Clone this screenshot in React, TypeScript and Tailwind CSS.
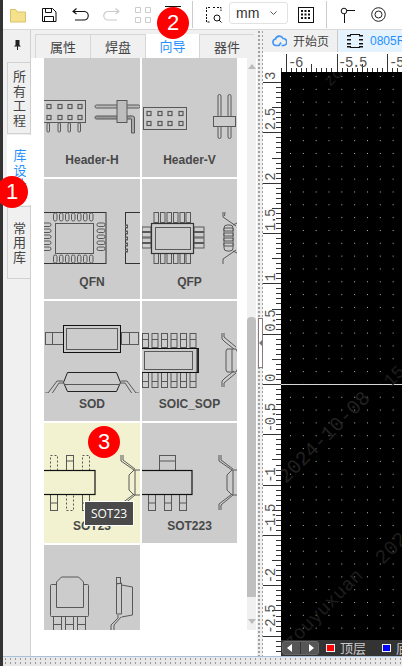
import type { ReactNode } from "react";

const cjk = "font-['Noto_Sans_CJK_SC','Noto_Sans',sans-serif]";

// page-coordinate viewBoxes, so the numbers below read straight off the screenshot
function Part({ box, h, children }: { box: number[]; h: number; children: ReactNode }) {
  return (
    <svg
      width={box[2]}
      height={h}
      viewBox={`${box[0]} ${box[1]} ${box[2]} ${h}`}
      className="block shrink-0"
      fill="none"
      stroke="#585858"
      strokeWidth="1"
    >
      {children}
    </svg>
  );
}

function Tile({
  box,
  label,
  h = 92,
  height = "h-[120px]",
  bg = "bg-[#cccccc]",
  children,
}: {
  box: number[];
  label?: string;
  h?: number;
  height?: string;
  bg?: string;
  children: ReactNode;
}) {
  return (
    <div className={`${height} ${bg} overflow-hidden`}>
      <Part box={box} h={h}>
        {children}
      </Part>
      {label && (
        <div className="h-[22px] flex items-center justify-center text-[12px] leading-none font-bold text-[#484848] font-['Liberation_Sans',sans-serif]">
          {label}
        </div>
      )}
    </div>
  );
}

function Rects({ list, dashed }: { list: number[][]; dashed?: boolean }) {
  return (
    <>
      {list.map((r, i) => (
        <rect
          key={i}
          x={r[0] + 0.5}
          y={r[1] + 0.5}
          width={r[2]}
          height={r[3]}
          rx={r[4] || 0}
          strokeDasharray={dashed ? "2 2" : undefined}
        />
      ))}
    </>
  );
}

function HeaderH() {
  const xs = [48, 59, 69, 79];
  return (
    <>
      <rect x="43.5" y="100.5" width="42" height="22" />
      {xs.map((x) => (
        <g key={x}>
          <rect x={x - 1} y="104.5" width="4" height="4" strokeWidth="1.2" />
          <rect x={x - 1} y="115.5" width="4" height="4" strokeWidth="1.2" />
          <rect x={x - 1} y="123" width="2.5" height="9" rx="1" strokeWidth="1" />
        </g>
      ))}
      <rect x="95" y="105" width="45" height="3" rx="1.5" fill="#bbb" />
      <rect x="95" y="116" width="37" height="3" rx="1.5" fill="#999" />
      <path d="M130 116h2.5a2 2 0 0 1 2 2v15h-3v-14" fill="#aaa" />
      <rect x="117" y="100.5" width="10" height="22" fill="#bdbdbd" />
    </>
  );
}

function HeaderV() {
  const xs = [148, 159, 169, 180];
  return (
    <>
      <rect x="143.5" y="107.5" width="43" height="22" />
      {xs.map((x) => (
        <g key={x}>
          <rect x={x - 1} y="111.5" width="4" height="4" strokeWidth="1.2" />
          <rect x={x - 1} y="121.5" width="4" height="4" strokeWidth="1.2" />
        </g>
      ))}
      <rect x="218" y="94.5" width="3" height="44" rx="1.5" />
      <rect x="228" y="94.5" width="3" height="44" rx="1.5" />
      <rect x="213.5" y="116.5" width="22" height="10" fill="#cccccc" />
    </>
  );
}

function Qfn() {
  const tops = [54, 60, 66, 72, 78, 84, 90];
  const sides = [223, 229, 235, 241, 247];
  return (
    <>
      <rect x="40" y="212.5" width="66" height="51" stroke="#333" />
      <rect x="55.5" y="223.5" width="38" height="30" />
      {tops.map((x) => (
        <g key={x}>
          <rect x={x - 0.5} y="213" width="3.5" height="8" rx="1.7" />
          <rect x={x - 0.5} y="255" width="3.5" height="8" rx="1.7" />
        </g>
      ))}
      {sides.map((y) => (
        <g key={y}>
          <rect x="40" y={y} width="11" height="3.5" rx="1.7" />
          <rect x="97" y={y} width="8" height="3.5" rx="1.7" />
        </g>
      ))}
      <rect x="125.5" y="212.5" width="20" height="51" stroke="#333" />
      {[225, 231, 237, 243, 249].map((y) => (
        <rect key={y} x="125.5" y={y} width="2" height="3" />
      ))}
    </>
  );
}

function Qfp() {
  const xs = [154, 160.5, 167, 173.5, 180, 186];
  const ys = [227, 232.5, 238, 243.5];
  return (
    <>
      {xs.map((x) => (
        <g key={x}>
          <rect x={x} y="212.5" width="4.5" height="10" />
          <rect x={x} y="253.5" width="4.5" height="10" />
        </g>
      ))}
      {ys.map((y) => (
        <g key={y}>
          <rect x="142" y={y} width="9" height="4.5" />
          <rect x="194" y={y} width="10" height="4.5" />
        </g>
      ))}
      <rect x="151.5" y="223.5" width="42" height="30" fill="#cccccc" stroke="#333" strokeWidth="1.2" />
      <rect x="155.5" y="227.5" width="35" height="22" />
      <path d="M223 212v5l13 9M223 264v-5l13-9M225 212l-.5 4" />
      <rect x="224" y="225" width="9" height="26" rx="3" />
      {[228, 233, 238, 243].map((y) => (
        <rect key={y} x="223.5" y={y} width="10" height="3" rx="1.5" />
      ))}
      <path d="M233 225l4-2M233 251l4 2" />
    </>
  );
}

function Sod() {
  return (
    <>
      <rect x="45.5" y="332.5" width="18" height="12" />
      <path d="M52.5 332v13M129.5 332v13" />
      <rect x="121.5" y="332.5" width="17" height="12" />
      <rect x="63.5" y="325.5" width="57" height="27" stroke="#111" fill="#cccccc" />
      <rect x="66.5" y="328.5" width="51" height="21" />
      <path d="M63.5 382.5L67.5 372.5H116.5L120.5 382.5L116.5 391.5H67.5Z" stroke="#222" />
      <path d="M64 384.5H120" />
      <path d="M63 381h-6l-9 12h-3v2h6l8-12h4M121 381h6l9 12h3v2h-6l-8-12h-4" />
    </>
  );
}

function Soic() {
  const xs = [142.5, 152, 161.5, 171, 180.5, 190];
  return (
    <>
      {xs.map((x) => (
        <g key={x}>
          <rect x={x} y="333.5" width="6" height="14" />
          <path d={`M${x} 339.5h6M${x} 381.5h6`} />
          <rect x={x} y="372.5" width="6" height="15" />
        </g>
      ))}
      <rect x="140" y="348.5" width="58.5" height="24" stroke="#111" fill="#cccccc" />
      <path d="M197.500 349v23" strokeWidth="2" stroke="#333" />
      <rect x="144.5" y="351.5" width="48" height="18" />
      <path d="M222 333v6l3 3 9 7M222 387v-6l3-3 9-7M224 333v4l12 10M224 387v-4l12-10" />
      <path d="M227 349h9l2 4v15l-2 4h-9l-1-2v-19z" />
      <path d="M232 349v23" />
    </>
  );
}

function SideLeads({ x }: { x: number }) {
  return (
    <>
      <path d={`M${x} 455v6l13 9M${x} 510v-6l13-10M${x + 2} 455v5l12 9M${x + 2} 510v-5l12-10`} />
      <path d={`M${x + 8} 475l5-5h8v25h-8l-5-5z`} />
      <path d={`M${x + 14} 470v25`} />
    </>
  );
}

function Sot23() {
  return (
    <>
      <Rects list={[[50, 455, 7, 15], [82, 455, 7, 15], [66, 494, 7, 16]]} dashed />
      <Rects list={[[66, 455, 7, 15], [50, 494, 7, 16], [82, 494, 7, 16]]} />
      <path d="M66 461h7M50 503h7M82 503h7" />
      <rect x="40" y="470.5" width="55" height="24" stroke="#111" strokeWidth="1.2" />
      <SideLeads x={121} />
    </>
  );
}

function Sot223() {
  return (
    <>
      <Rects list={[[159, 455, 16, 15], [148, 494, 7, 16], [164, 494, 7, 16], [179, 494, 7, 16]]} />
      <path d="M159 461h16M148 503h7M164 503h7M179 503h7" />
      <rect x="140" y="470.5" width="52" height="24" stroke="#111" strokeWidth="1.2" />
      <SideLeads x={219} />
    </>
  );
}

function Dpak() {
  return (
    <>
      <rect x="50.5" y="584.5" width="38" height="32" rx="1" />
      <path d="M56.5 607.5V582l5-5h17l5 5v25.500Z" fill="#cccccc" />
      {[53, 65, 77].map((x) => (
        <g key={x}>
          <rect x={x + 0.5} y="616.500" width="8" height="20" />
          <path d={`M${x} 624.500h8`} />
        </g>
      ))}
      <rect x="116.500" y="577.500" width="4" height="6" />
      <path d="M116.500 584v30h5v-31zM121.500 585l11 2v28l-11 2" />
      <path d="M118 615v3l-7 7v5M121 617l-7 8v5" />
    </>
  );
}

function Ruler() {
  const step = 50.33 / 10;
  const ticks = [];
  for (let i = -60; i <= 55; i++) {
    const y = Math.round(384 + i * step) + 0.5;
    const major = i % 10 === 0;
    const mid = !major && i % 5 === 0;
    ticks.push(
      <path key={i} d={`M${major ? 263 : mid ? 272 : 276} ${y}H281`} stroke="#333" strokeWidth="1" />,
    );
  }
  const labels = ["3", "2.5", "2", "1.5", "1", "0.5", "0", "-0.5", "-1", "-1.5", "-2", "-2.5"];
  return (
    <svg width="18" height="584" viewBox="263 72 18 584" className="block">
      {ticks}
      {labels.map((t, i) => {
        const y = 82 + i * 50.33 - 2;
        return (
          <text
            key={t}
            transform={`translate(275 ${y}) rotate(-90)`}
            fontFamily="Liberation Mono, monospace"
            fontSize="14"
            letterSpacing="-1.4"
            fill="#555"
          >
            {t}
          </text>
        );
      })}
    </svg>
  );
}

function TopRuler() {
  const ticks = [];
  for (let i = -3; i <= 24; i++) {
    const x = Math.round(286 + i * 5.05) + 0.5;
    const major = i % 10 === 0;
    const mid = !major && i % 5 === 0;
    if (x < 281) continue;
    ticks.push(<path key={i} d={`M${x} ${major ? 54 : mid ? 64 : 68}V72`} stroke="#333" />);
  }
  return (
    <svg width="134" height="20" viewBox="268 52 134 20" className="block">
      {ticks}
      {[
        ["-6", 288],
        ["-5.5", 338],
        ["-5", 389],
      ].map(([t, x]) => (
        <text
          key={t}
          x={x}
          y="67"
          fontFamily="Liberation Mono, monospace"
          fontSize="14"
          letterSpacing="-1.4"
          fill="#555"
        >
          {t}
        </text>
      ))}
    </svg>
  );
}

function Canvas() {
  return (
    <svg width="100%" height="100%" className="block">
      <defs>
        <pattern id="dots" x="9" y="4" width="12.83" height="12.83" patternUnits="userSpaceOnUse">
          <rect width="1" height="1" fill="#b5b5b5" />
        </pattern>
      </defs>
      <rect width="100%" height="100%" fill="#000" />
      <rect width="100%" height="100%" fill="url(#dots)" />
      <rect x="0" y="312" width="100%" height="1" fill="#d8d8d8" />
    </svg>
  );
}

function Toolbar() {
  return (
    <div className="h-[30px] shrink-0 flex items-center bg-white border-b border-[#d9d9d9]">
      <svg width="16" height="16" viewBox="0 0 16 16" className="ml-[7px]">
        <path d="M.5 2.500h5l2 2.500h8v10H.5z" fill="#f5e08c" stroke="#d9c26a" />
      </svg>
      <svg width="16" height="16" viewBox="0 0 16 16" className="ml-[15px]" fill="none" stroke="#111">
        <path d="M1.500 1.500h10l3.500 3.500v9.500h-13.500z" />
        <path d="M4.500 1.500v4h6v-4M3.500 14.500v-5h9v5" />
      </svg>
      <svg width="17" height="13" viewBox="0 0 17 13" className="ml-[15px]" fill="none" stroke="#111" strokeWidth="1.100">
        <path d="M4.500.5L1 3.500l3.500 2.500M1 3.500h11a3.800 3.800 0 0 1 0 8.500H3" />
      </svg>
      <svg width="17" height="13" viewBox="0 0 17 13" className="ml-[14px]" fill="none" stroke="#c9c9c9" strokeWidth="1.100">
        <path d="M12.500.5L16 3.500l-3.500 2.500M16 3.500H5a3.800 3.800 0 0 0 0 8.500h9" />
      </svg>
      <svg width="16" height="16" viewBox="0 0 16 16" className="ml-[15px]" fill="none" stroke="#ccc">
        <path d="M.5.5h5v5h-5zM10.500.5h5v5h-5zM.5 10.500h5v5h-5zM10.500 10.500h5v5h-5z" />
      </svg>
      <div className="ml-[14px] w-4 h-4 border-t border-[#111] self-start mt-[6px]" />
      <div className="ml-[11px] w-px h-[27px] bg-[#ccc]" />
      <svg width="16" height="16" viewBox="0 0 16 16" className="ml-[13px]" fill="none" stroke="#111">
        <path d="M.5 5V.5h4M11 .5h4V4M.5 10v5h3" strokeDasharray="2 1" />
        <path d="M.5 7v2M7 .5h2" />
        <circle cx="11" cy="11" r="3" />
        <path d="M13 13l2.500 2.500" />
      </svg>
      <div className="ml-[7px] w-[59px] h-[22px] mb-[3px] border border-[#e2e2e2] rounded-[3px] flex items-center justify-between pl-1.5 pr-2.5 text-[14px] leading-none text-[#333] font-['Liberation_Sans',sans-serif]">
        mm
        <svg width="7" height="5" viewBox="0 0 7 5" fill="none" stroke="#555">
          <path d="M.5.5l3 3 3-3" />
        </svg>
      </div>
      <svg width="16" height="16" viewBox="0 0 16 16" className="ml-[10px]" fill="none" stroke="#111">
        <rect x=".5" y=".5" width="15" height="15" />
        {[3, 6.500, 10].map((y) =>
          [3, 6.500, 10].map((x) => <rect key={`${x}${y}`} x={x} y={y} width="2" height="2" fill="#111" stroke="none" />),
        )}
      </svg>
      <div className="ml-[12px] w-px h-[27px] bg-[#ccc]" />
      <svg width="15" height="16" viewBox="0 0 15 16" className="ml-[13px]" fill="none" stroke="#111">
        <circle cx="4" cy="4" r="2.800" />
        <path d="M4.500 7v9M7 3.500h8" />
      </svg>
      <svg width="15" height="15" viewBox="0 0 15 15" className="ml-[16px]" fill="none" stroke="#222">
        <circle cx="7.500" cy="7.500" r="6.800" />
        <circle cx="7.500" cy="7.500" r="3.500" />
      </svg>
    </div>
  );
}

function SideTab({ chars, active, h }: { chars: string[]; active?: boolean; h: string }) {
  return (
    <div
      className={`${h} ${cjk} flex flex-col items-center justify-center text-[13px] leading-[14.5px] ${
        active
          ? "w-[37px] bg-white text-[#2490ff] pr-[11px] relative z-10"
          : "w-[24px] bg-[#f0f0f0] text-[#444] border border-[#d0d0d0] pl-px"
      }`}
    >
      {chars.map((c) => (
        <span key={c}>{c}</span>
      ))}
    </div>
  );
}

function PanelTab({ label, active, w }: { label: string; active?: boolean; w: string }) {
  return (
    <div
      className={`${w} ${cjk} h-full flex items-center justify-center text-[13px] border-l border-[#d6d6d6] ${
        active ? "bg-white text-[#2490ff]" : "bg-[#f0f0f0] text-[#444] border-t"
      }`}
    >
      {label}
    </div>
  );
}

function LeftPanel() {
  return (
    <div className="w-[254px] shrink-0 flex bg-white">
      <div className="w-[28px] shrink-0 flex flex-col bg-[#f0f0f0]">
        <div className="h-[32px] flex items-center justify-center pb-[2px] text-[#222]">
          <svg width="7" height="10" viewBox="0 0 7 10" fill="#222">
            <path d="M1.500 0h4v5l1.500 1.500H0L1.500 5zM3 6h1v4H3z" />
          </svg>
        </div>
        <div className="pl-1 flex flex-col gap-px">
          <SideTab chars={["所", "有", "工", "程"]} h="h-[72px]" />
          <SideTab chars={["库", "设", "计"]} h="h-[70px]" active />
          <SideTab chars={["常", "用", "库"]} h="h-[73px]" />
        </div>
      </div>
      <div className="flex-1 min-w-0 flex flex-col border-l border-[#d0d0d0] -ml-px">
        <div className="h-[28px] shrink-0 bg-[#f0f0f0] pt-1 pl-1 flex">
          <PanelTab label="属性" w="w-[55px]" />
          <PanelTab label="焊盘" w="w-[55px]" />
          <PanelTab label="向导" w="w-[54px]" active />
          <PanelTab label="器件" w="w-[55px]" />
        </div>
        <div className="flex-1 min-h-0 flex">
          <div className="flex-1 min-w-0 pl-[13px]">
            <div className="h-[572px] overflow-hidden grid grid-cols-[96px_95px] gap-[2px] content-start">
              <Tile box={[44, 58, 96]} label="Header-H" h={91} height="h-[119px]">
                <HeaderH />
              </Tile>
              <Tile box={[142, 58, 95]} label="Header-V" h={91} height="h-[119px]">
                <HeaderV />
              </Tile>
              <Tile box={[44, 179, 96]} label="QFN">
                <Qfn />
              </Tile>
              <Tile box={[142, 179, 95]} label="QFP">
                <Qfp />
              </Tile>
              <Tile box={[44, 301, 96]} label="SOD">
                <Sod />
              </Tile>
              <Tile box={[142, 301, 95]} label="SOIC_SOP">
                <Soic />
              </Tile>
              <Tile box={[44, 423, 96]} label="SOT23" bg="bg-[#f2f1d0]">
                <Sot23 />
              </Tile>
              <Tile box={[142, 423, 95]} label="SOT223">
                <Sot223 />
              </Tile>
              <Tile box={[44, 545, 96]} h={85}>
                <Dpak />
              </Tile>
            </div>
          </div>
          <div className="w-[9px] shrink-0 h-[572px] bg-[#f0f0f0] flex flex-col items-center justify-between py-1.5 mr-[1px] relative">
            <div className="w-0 h-0 border-x-[4px] border-x-transparent border-b-[5px] border-b-[#bbb]" />
            <div className="absolute left-[0px] top-[259px] w-[9px] h-[280px] rounded-t-[4px] bg-[#bfbfbf]" />
            <div className="w-0 h-0 border-x-[4px] border-x-transparent border-t-[5px] border-t-[#bbb]" />
          </div>
        </div>
      </div>
    </div>
  );
}

function RightPane() {
  const mark = "absolute -rotate-45 whitespace-nowrap font-['Liberation_Mono',monospace]";
  return (
    <div className="flex-1 min-w-0 flex flex-col relative">
      <div className="h-[22px] shrink-0 flex bg-[#f0f0f0]">
        <div className="w-[5px] shrink-0" />
        <div className={`${cjk} w-[70px] shrink-0 flex items-center gap-[6px] pl-1 text-[12px] text-[#444] border-r border-[#ccc]`}>
          <svg width="15" height="12" viewBox="0 0 15 12" fill="none" stroke="#3d95f5" strokeWidth="1.600">
            <path d="M4 10.500a3.300 3.300 0 0 1-.5-6.500 4 4 0 0 1 7.500-.5 3.500 3.500 0 0 1 .5 7h-2M4 10.500h3l2-3" />
          </svg>
          开始页
        </div>
        <div className="flex-1 min-w-0 overflow-hidden bg-[#e4f3fe] flex items-center gap-[7px] pl-[9px] text-[12px] text-[#2490ff] font-['Liberation_Sans',sans-serif] whitespace-nowrap">
          <svg width="16" height="14" viewBox="0 0 16 14" className="shrink-0" fill="#111">
            <path d="M0 1h4v1.500H0zM12 1h4v1.500h-4zM0 5h4v1.500H0zM12 5h4v1.500h-4zM0 9h4v1.500H0zM12 9h4v1.500h-4zM3 0h10v1H3zM3 13h10v1H3zM0 12h4v1.500H0zM12 12h4v1.500h-4z" />
          </svg>
          0805R
        </div>
      </div>
      <div className="h-[20px] shrink-0 bg-white">
        <div className="h-full pl-[5px]">
          <TopRuler />
        </div>
      </div>
      <div className="flex-1 min-h-0 flex bg-white">
        <div className="w-[18px] shrink-0 overflow-hidden">
          <Ruler />
        </div>
        <div className="flex-1 min-w-0 flex flex-col">
          <div className="flex-1 min-h-0 relative overflow-hidden">
            <Canvas />
            <span className={`${mark} left-[-16px] top-[356px] text-[20px] leading-none text-[#222]`}>2024-10-08</span>
            <span className={`${mark} left-[86px] top-[450px] text-[20px] leading-none text-[#1d1d1d]`}>2024-10</span>
            <span className={`${mark} left-[-8px] top-[528px] text-[19px] leading-none text-[#1d1d1d]`}>zouyuxuan</span>
            <span className={`${mark} left-[98px] top-[284px] text-[18px] leading-none text-[#1d1d1d]`}>15:40</span>
            <span className={`${mark} left-[42px] top-[-6px] text-[16px] leading-none text-[#1d1d1d]`}>zou</span>
          </div>
          <div className={`${cjk} h-[16px] shrink-0 bg-[#333] flex items-center overflow-hidden whitespace-nowrap text-[13px] text-[#c8c8c8]`}>
            <div className="ml-[1px] w-[37px] h-[14px] shrink-0 rounded-[3px] bg-[#565656] border border-[#666] flex items-center justify-around">
              <div className="w-0 h-0 border-y-[4px] border-y-transparent border-r-[5px] border-r-white" />
              <div className="w-px h-full bg-[#333]" />
              <div className="w-0 h-0 border-y-[4px] border-y-transparent border-l-[5px] border-l-white" />
            </div>
            <div className="ml-[2px] w-px h-full bg-[#555]" />
            <div className="ml-[5px] w-[9px] h-[8px] shrink-0 bg-[#ff0000] border border-[#eee]" />
            <span className="ml-[5px]">顶层</span>
            <div className="ml-[11px] w-px h-full bg-[#555]" />
            <div className="ml-[5px] w-[9px] h-[8px] shrink-0 bg-[#0000ff] border border-[#eee]" />
            <span className="ml-[5px]">底层</span>
          </div>
        </div>
      </div>
    </div>
  );
}

function Badge({ n, className }: { n: string; className: string }) {
  return (
    <div
      className={`${className} absolute z-20 w-[32px] h-[32px] rounded-full bg-[#ff0000] text-white flex items-center justify-center text-[22px] leading-none font-['Liberation_Sans',sans-serif]`}
    >
      {n}
    </div>
  );
}

export default function App() {
  return (
    <div className="w-[402px] h-[666px] flex overflow-hidden relative bg-white">
      <div className="w-[3px] shrink-0 bg-[#333]" />
      <div className="flex-1 min-w-0 flex flex-col">
        <Toolbar />
        <div className="flex-1 min-h-0 flex">
          <LeftPanel />
          <div className="w-[6px] shrink-0 bg-[#f0f0f0] bg-[radial-gradient(#999_0.7px,transparent_0.8px)] bg-[length:4px_4px] relative">
            <div className="absolute left-[1px] top-[288px] w-[5px] h-[50px] bg-white border border-[#8a7a7a] flex items-center">
              <div className="w-0 h-0 border-y-[3px] border-y-transparent border-r-[3px] border-r-[#777]" />
            </div>
          </div>
          <RightPane />
        </div>
        <div className="h-[10px] shrink-0 border-t border-[#a9c0da] bg-[#e8e8e8] bg-[radial-gradient(#999_0.8px,transparent_0.9px)] bg-[length:5px_4px]" />
      </div>

      <Badge n="1" className="left-[-4px] top-[176px]" />
      <Badge n="2" className="left-[157px] top-[7px]" />
      <Badge n="3" className="left-[88px] top-[426px]" />
      <div className="absolute left-[84px] top-[501px] w-[50px] h-[25px] bg-[#4a4a4a] border border-white flex items-center justify-center text-[12px] text-white font-['Open_Sans',sans-serif]">
        SOT23
      </div>
    </div>
  );
}
